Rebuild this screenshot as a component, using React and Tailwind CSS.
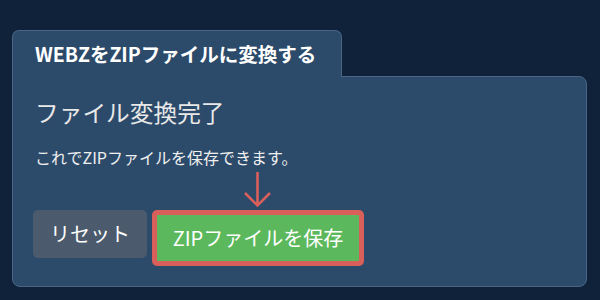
import React from "react";

export default function App() {
  const font = { fontFamily: '"Noto Sans CJK JP", "Noto Sans", sans-serif' };
  return (
    <div className="w-[600px] h-[300px] bg-[#10223a] overflow-hidden" style={font}>
      <div className="pt-[30px] pl-[12px]">
        <div className="w-[575px]">
          <div className="relative z-10 -mb-px w-[330px] h-[47px] bg-[#2c4a6a] border border-b-0 border-[#4a6586] rounded-t-[7px] flex items-center pl-[22px]">
            <span className="text-white font-bold text-[19.5px] leading-none">WEBZをZIPファイルに変換する</span>
          </div>
          <div className="h-[211px] bg-[#2c4a6a] border border-[#4a6586] rounded-b-[8px] rounded-tr-[8px] pl-[22px] pt-[19px]">
            <div className="text-[23.7px] leading-[32px] text-[#e8e8e8]">ファイル変換完了</div>
            <div className="mt-[18px] text-[16px] leading-[22px] text-[#f0f0f0]">これでZIPファイルを保存できます。</div>
            <svg className="ml-[209px] mt-[4px] block" width="27" height="36" viewBox="0 0 27 36">
              <path d="M13.5 0 V33 M1 21 L13.5 33.5 L26 21" fill="none" stroke="#d9605a" strokeWidth="2.6" />
            </svg>
            <div className="-ml-[2px] mt-[2px] flex items-start gap-[5px]">
              <button className="w-[114px] h-[48px] rounded-[5px] bg-[#4b5b6d] text-white text-[20px] flex items-center justify-center">
                リセット
              </button>
              <div className="w-[212px] h-[56px] border-[5px] border-[#d9605a] rounded-[5px] flex">
                <button className="flex-1 bg-[#5cb85c] text-white text-[20px] flex items-center justify-center">
                  ZIPファイルを保存
                </button>
              </div>
            </div>
          </div>
        </div>
      </div>
    </div>
  );
}
